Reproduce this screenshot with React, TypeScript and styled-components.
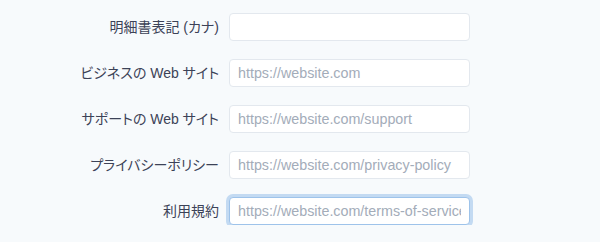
import React from "react";
import styled, { createGlobalStyle } from "styled-components";

const Global = createGlobalStyle`
  html, body { margin: 0; padding: 0; background: #f7fafc; }
  body { font-family: "Noto Sans CJK JP", "Liberation Sans", sans-serif; -webkit-font-smoothing: antialiased; }
`;

const Form = styled.div`
  display: grid;
  grid-template-columns: 229px 241px;
  row-gap: 18px;
  padding-top: 13px;
  align-items: center;
`;

const Label = styled.label`
  justify-self: end;
  padding-right: 10px;
  font-family: "Liberation Sans", "Noto Sans CJK JP", sans-serif;
  font-feature-settings: "palt";
  font-size: 14px;
  color: #3c4257;
  white-space: nowrap;
  line-height: 20px;
`;

const Input = styled.input<{ $focused?: boolean }>`
  box-sizing: border-box;
  height: 28px;
  width: 241px;
  margin: 0;
  padding: 0 8px;
  border: 1px solid ${(p) => (p.$focused ? "#9ec3ea" : "#e3e8ee")};
  border-radius: 4px;
  background: #fff;
  font-family: "Liberation Sans", "Noto Sans", sans-serif;
  font-size: 14.3px;
  color: #3c4257;
  outline: none;
  box-shadow: ${(p) => (p.$focused ? "0 0 0 3px rgba(130, 180, 230, 0.45)" : "none")};
  &::placeholder { color: #a3acb9; }
`;

const rows = [
  { label: "明細書表記 (カナ)", placeholder: "" },
  { label: "ビジネスの Web サイト", placeholder: "https://website.com" },
  { label: "サポートの Web サイト", placeholder: "https://website.com/support" },
  { label: "プライバシーポリシー", placeholder: "https://website.com/privacy-policy" },
  { label: "利用規約", placeholder: "https://website.com/terms-of-service", focused: true },
];

export default function App() {
  return (
    <>
      <Global />
      <Form>
        {rows.map((r) => (
          <React.Fragment key={r.label}>
            <Label>{r.label}</Label>
            <Input placeholder={r.placeholder} $focused={r.focused} readOnly />
          </React.Fragment>
        ))}
      </Form>
    </>
  );
}
